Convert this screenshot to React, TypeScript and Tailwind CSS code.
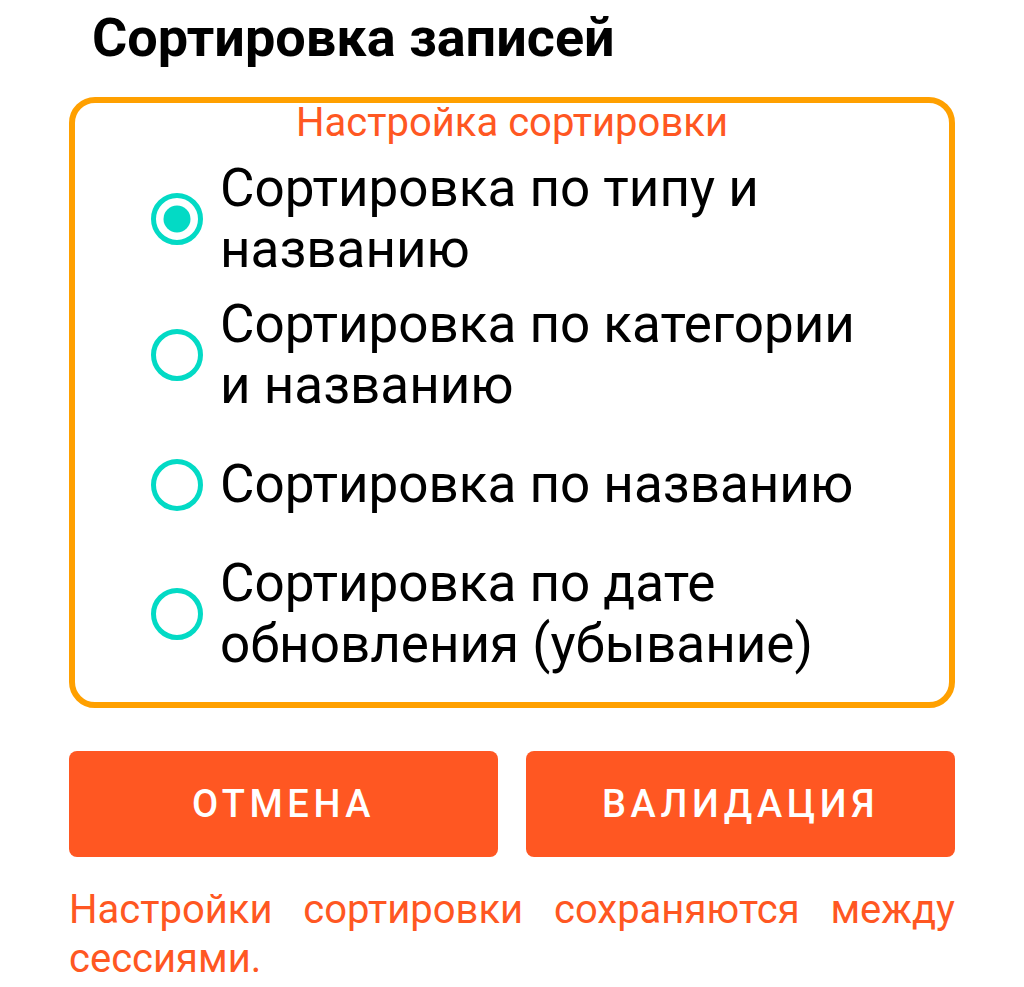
import { useState } from 'react';

type SortOption = { id: string; label: string };

const options: SortOption[] = [
  { id: 'type', label: 'Сортировка по типу и названию' },
  { id: 'category', label: 'Сортировка по категории и названию' },
  { id: 'name', label: 'Сортировка по названию' },
  { id: 'updated', label: 'Сортировка по дате обновления (убывание)' },
];

function RadioMark({ checked }: { checked: boolean }) {
  return (
    <svg width="54" height="54" viewBox="0 0 54 54" className="shrink-0">
      <circle cx="27" cy="27" r="23.5" fill="none" stroke="#03dac5" strokeWidth="5" />
      {checked && <circle cx="27" cy="27" r="13.5" fill="#03dac5" />}
    </svg>
  );
}

export default function App() {
  const [selected, setSelected] = useState('type');

  return (
    <div className="w-[1024px] min-h-[987px] bg-white px-[69px] pt-[6px] font-['Roboto',sans-serif]">
      <h1 className="pl-[23px] text-[54px] leading-[64px] font-bold text-black">Сортировка записей</h1>

      {/* Settings group */}
      <div className="mt-[27px] rounded-[26px] border-[6px] border-[#ffa000] pb-[20px]">
        <div className="text-center text-[40px] leading-[40px] text-[#ff5722]">Настройка сортировки</div>
        <div className="mt-[8px] flex flex-col">
          {options.map((opt) => (
            <button
              key={opt.id}
              onClick={() => setSelected(opt.id)}
              className="flex min-h-[123px] items-center gap-[16px] py-[7px] pl-[75px] pr-[64px] text-left"
            >
              <RadioMark checked={selected === opt.id} />
              <span className="text-[53px] leading-[61px] text-black">{opt.label}</span>
            </button>
          ))}
        </div>
      </div>

      {/* Actions */}
      <div className="mt-[43px] grid grid-cols-2 gap-[28px]">
        <button className="h-[106px] rounded-[8px] bg-[#ff5722] text-[38px] font-medium tracking-[0.12em] text-white">
          ОТМЕНА
        </button>
        <button className="h-[106px] rounded-[8px] bg-[#ff5722] text-[38px] font-medium tracking-[0.12em] text-white">
          ВАЛИДАЦИЯ
        </button>
      </div>

      <p className="mt-[28px] text-justify text-[40px] leading-[49px] text-[#ff5722]">
        Настройки сортировки сохраняются между сессиями.
      </p>
    </div>
  );
}
